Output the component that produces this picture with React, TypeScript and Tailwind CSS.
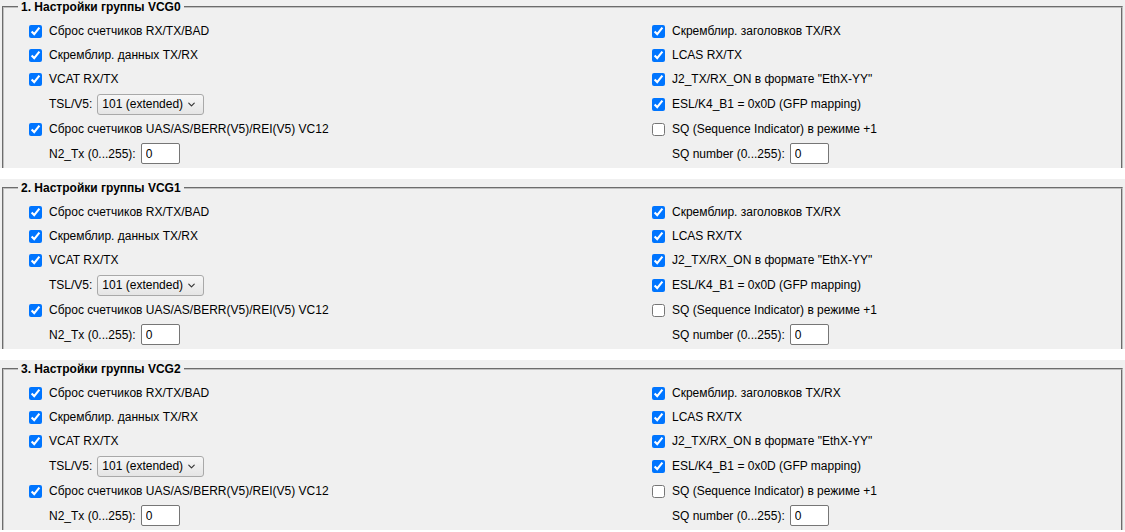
import { ChevronDown } from "lucide-react";

const groups = ["VCG0", "VCG1", "VCG2"];

const leftChecks = [
  "Сброс счетчиков RX/TX/BAD",
  "Скремблир. данных TX/RX",
  "VCAT RX/TX",
];

const rightChecks = [
  "Скремблир. заголовков TX/RX",
  "LCAS RX/TX",
  'J2_TX/RX_ON в формате "EthX-YY"',
];

function Check({
  label,
  checked = true,
  tall = false,
}: {
  label: string;
  checked?: boolean;
  tall?: boolean;
}) {
  return (
    <label className={`flex items-center gap-[7px] ${tall ? "h-[26px]" : "h-[24px]"}`}>
      <input
        type="checkbox"
        defaultChecked={checked}
        className="m-0 h-[13px] w-[13px] shrink-0 accent-[#0075ff]"
      />
      <span>{label}</span>
    </label>
  );
}

function NumberField({ label }: { label: string }) {
  return (
    <div className="flex h-[25px] items-center pl-[20px]">
      <span>{label}</span>
      <input
        type="text"
        defaultValue="0"
        className="ml-[5px] h-[21px] w-[39px] rounded-[2px] border border-[#767676] bg-white px-[4px] outline-none"
      />
    </div>
  );
}

function Group({ index, name }: { index: number; name: string }) {
  return (
    <div className="h-[170px] overflow-hidden bg-[#f0f0f0] pt-[2px]">
      <fieldset className="mx-[2px] h-[200px] border-2 border-[#c0c0c0] pt-[5px] [border-style:groove]">
        <legend className="ml-[14px] px-[3px] text-[12px] leading-[14px] font-bold">
          {index + 1}. Настройки группы {name}
        </legend>
        <div className="grid grid-cols-[623px_1fr] pl-[25px]">
          <div className="flex flex-col">
            {leftChecks.map((c) => (
              <Check key={c} label={c} />
            ))}
            <div className="flex h-[26px] items-center pl-[20px]">
              <span>TSL/V5:</span>
              <div className="relative ml-[5px]">
                <select
                  defaultValue="101"
                  className="h-[21px] w-[107px] appearance-none rounded-[3px] border border-[#a9a9a9] bg-linear-to-b from-[#f7f7f7] to-[#e5e5e5] pl-[4px] outline-none"
                >
                  <option value="101">101 (extended)</option>
                  <option value="000">000</option>
                </select>
                <ChevronDown
                  size={11}
                  strokeWidth={2.5}
                  className="pointer-events-none absolute top-[5px] right-[7px] text-[#333]"
                />
              </div>
            </div>
            <Check label="Сброс счетчиков UAS/AS/BERR(V5)/REI(V5) VC12" />
            <NumberField label="N2_Tx (0...255):" />
          </div>
          <div className="flex flex-col">
            {rightChecks.map((c) => (
              <Check key={c} label={c} />
            ))}
            <Check label="ESL/K4_B1 = 0x0D (GFP mapping)" tall />
            <Check label="SQ (Sequence Indicator) в режиме +1" checked={false} />
            <NumberField label="SQ number (0...255):" />
          </div>
        </div>
      </fieldset>
    </div>
  );
}

export default function App() {
  return (
    <div className="h-[532px] w-[1125px] overflow-hidden bg-white font-['Liberation_Sans',Arial,sans-serif] text-[12px] text-black">
      <div className="-mt-[2px] flex flex-col gap-[11px]">
        {groups.map((g, i) => (
          <Group key={g} index={i} name={g} />
        ))}
      </div>
    </div>
  );
}
